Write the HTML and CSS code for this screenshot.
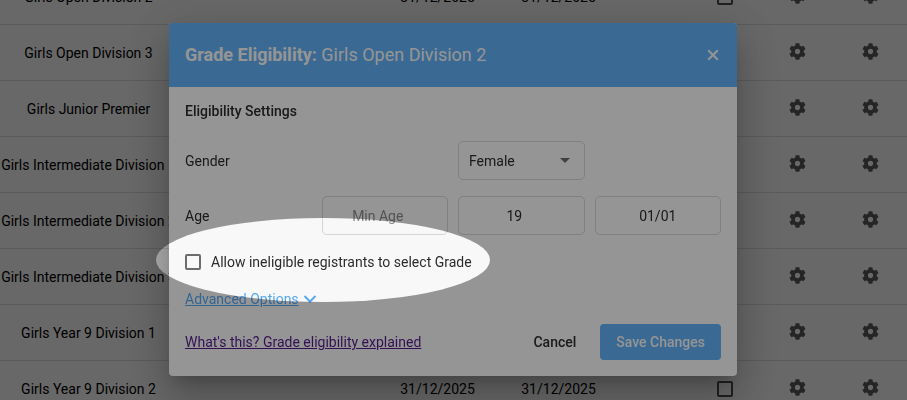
FILE: index.html
```
<!DOCTYPE html>
<html lang="en">
<head>
    <meta charset="UTF-8" />
    <title>Grade Eligibility</title>
    <link rel="stylesheet" href="styles.css">
</head>
<body>
    <svg class="sprite" aria-hidden="true">
        <symbol id="cog" viewBox="0 0 512 512">
            <path d="M487.4 315.7l-42.6-24.6c4.3-23.2 4.3-47 0-70.2l42.6-24.6c4.9-2.8 7.1-8.6 5.5-14-11.1-35.6-30-67.8-54.7-94.6-3.8-4.1-10-5.1-14.8-2.3L380.8 110c-17.9-15.4-38.5-27.3-60.8-35.1V25.8c0-5.6-3.9-10.5-9.4-11.7-36.7-8.2-74.3-7.8-109.2 0-5.5 1.2-9.4 6.1-9.4 11.7V75c-22.2 7.9-42.8 19.8-60.8 35.1L88.7 85.5c-4.9-2.8-11-1.9-14.8 2.3-24.7 26.7-43.6 58.9-54.7 94.6-1.7 5.4.6 11.2 5.5 14L67.3 221c-4.3 23.2-4.3 47 0 70.2l-42.6 24.6c-4.9 2.8-7.1 8.6-5.5 14 11.1 35.6 30 67.8 54.7 94.6 3.8 4.1 10 5.1 14.8 2.3l42.6-24.6c17.9 15.4 38.5 27.3 60.8 35.1v49.2c0 5.6 3.9 10.5 9.4 11.7 36.7 8.2 74.3 7.8 109.2 0 5.5-1.2 9.4-6.1 9.4-11.7v-49.2c22.2-7.9 42.8-19.8 60.8-35.1l42.6 24.6c4.9 2.8 11 1.9 14.8-2.3 24.7-26.7 43.6-58.9 54.7-94.6 1.5-5.5-.7-11.3-5.6-14.1zM256 336c-44.1 0-80-35.9-80-80s35.9-80 80-80 80 35.9 80 80-35.9 80-80 80z"/>
        </symbol>
    </svg>

    <table class="grades">
        <colgroup>
            <col class="col-name"><col><col class="col-date"><col class="col-date"><col class="col-gap"><col class="col-icon"><col class="col-icon"><col class="col-icon">
        </colgroup>
        <tbody>
            <tr>
                <td>Girls Open Division 2</td><td></td><td>31/12/2025</td><td>31/12/2025</td><td></td>
                <td><input type="checkbox" class="check check-dark" aria-label="Select Girls Open Division 2"></td>
                <td><button class="cog" aria-label="Eligibility"><svg><use href="#cog"/></svg></button></td>
                <td><button class="cog" aria-label="Settings"><svg><use href="#cog"/></svg></button></td>
            </tr>
            <tr>
                <td>Girls Open Division 3</td><td></td><td>31/12/2025</td><td>31/12/2025</td><td></td>
                <td><input type="checkbox" class="check check-dark" aria-label="Select Girls Open Division 3"></td>
                <td><button class="cog" aria-label="Eligibility"><svg><use href="#cog"/></svg></button></td>
                <td><button class="cog" aria-label="Settings"><svg><use href="#cog"/></svg></button></td>
            </tr>
            <tr>
                <td>Girls Junior Premier</td><td></td><td>31/12/2025</td><td>31/12/2025</td><td></td>
                <td><input type="checkbox" class="check check-dark" aria-label="Select Girls Junior Premier"></td>
                <td><button class="cog" aria-label="Eligibility"><svg><use href="#cog"/></svg></button></td>
                <td><button class="cog" aria-label="Settings"><svg><use href="#cog"/></svg></button></td>
            </tr>
            <tr>
                <td>Girls Intermediate Division 1</td><td></td><td>31/12/2025</td><td>31/12/2025</td><td></td>
                <td><input type="checkbox" class="check check-dark" aria-label="Select Girls Intermediate Division 1"></td>
                <td><button class="cog" aria-label="Eligibility"><svg><use href="#cog"/></svg></button></td>
                <td><button class="cog" aria-label="Settings"><svg><use href="#cog"/></svg></button></td>
            </tr>
            <tr>
                <td>Girls Intermediate Division 2</td><td></td><td>31/12/2025</td><td>31/12/2025</td><td></td>
                <td><input type="checkbox" class="check check-dark" aria-label="Select Girls Intermediate Division 2"></td>
                <td><button class="cog" aria-label="Eligibility"><svg><use href="#cog"/></svg></button></td>
                <td><button class="cog" aria-label="Settings"><svg><use href="#cog"/></svg></button></td>
            </tr>
            <tr>
                <td>Girls Intermediate Division 3</td><td></td><td>31/12/2025</td><td>31/12/2025</td><td></td>
                <td><input type="checkbox" class="check check-dark" aria-label="Select Girls Intermediate Division 3"></td>
                <td><button class="cog" aria-label="Eligibility"><svg><use href="#cog"/></svg></button></td>
                <td><button class="cog" aria-label="Settings"><svg><use href="#cog"/></svg></button></td>
            </tr>
            <tr>
                <td>Girls Year 9 Division 1</td><td></td><td>31/12/2025</td><td>31/12/2025</td><td></td>
                <td><input type="checkbox" class="check check-dark" aria-label="Select Girls Year 9 Division 1"></td>
                <td><button class="cog" aria-label="Eligibility"><svg><use href="#cog"/></svg></button></td>
                <td><button class="cog" aria-label="Settings"><svg><use href="#cog"/></svg></button></td>
            </tr>
            <tr>
                <td>Girls Year 9 Division 2</td><td></td><td>31/12/2025</td><td>31/12/2025</td><td></td>
                <td><input type="checkbox" class="check check-dark" aria-label="Select Girls Year 9 Division 2"></td>
                <td><button class="cog" aria-label="Eligibility"><svg><use href="#cog"/></svg></button></td>
                <td><button class="cog" aria-label="Settings"><svg><use href="#cog"/></svg></button></td>
            </tr>
        </tbody>
    </table>

    <div class="backdrop">
        <div class="dialog" role="dialog" aria-labelledby="dialog-title">
            <div class="dialog-header">
                <h2 id="dialog-title"><b>Grade Eligibility:</b> Girls Open Division 2</h2>
                <button class="close" aria-label="Close">
                    <svg viewBox="0 0 12 12"><path d="M1.2 1.2l9.6 9.6M10.8 1.2l-9.6 9.6"/></svg>
                </button>
            </div>
            <form class="dialog-body">
                <h3>Eligibility Settings</h3>
                <div class="fields">
                    <label class="gender-label" for="gender">Gender</label>
                    <div class="select">
                        <select id="gender">
                            <option>Female</option>
                            <option>Male</option>
                        </select>
                    </div>
                    <label class="age-label" for="min-age">Age</label>
                    <input type="text" class="age" id="min-age" placeholder="Min Age">
                    <input type="text" class="age" value="19" aria-label="Max age">
                    <input type="text" value="01/01" aria-label="Age date">
                </div>
                <label class="allow">
                    <input type="checkbox" class="check">
                    Allow ineligible registrants to select Grade
                </label>
                <a href="#" class="advanced"><span>Advanced Options</span><svg viewBox="0 0 14 8"><path d="M1.5 1l5.5 5.5 5.5-5.5"/></svg></a>
                <div class="actions">
                    <a href="#" class="help">What's this? Grade eligibility explained</a>
                    <button type="button" class="btn">Cancel</button>
                    <button type="button" class="btn btn-save">Save Changes</button>
                </div>
            </form>
            <div class="spotlight"></div>
        </div>
    </div>
</body>
</html>
```

FILE: styles.css
```
* {
    margin: 0;
    padding: 0;
    box-sizing: border-box;
}
body {
    height: 100vh;
    overflow: hidden;
    font-family: Roboto, sans-serif;
    font-size: 14px;
    line-height: 20px;
    color: #2c2c2c;
    background-color: #fff;
}
input, select, button {
    font: inherit;
    color: inherit;
}
button {
    border: none;
    background: none;
    cursor: pointer;
}
.sprite {
    display: none;
}

/* grades list */
.grades {
    width: 100%;
    margin-top: -31px;
    table-layout: fixed;
    border-collapse: separate;
    border-spacing: 0;
    color: #000;
}
.col-name {
    width: 177px;
}
.col-date {
    width: 121px;
}
.col-gap {
    width: 69px;
}
.col-icon {
    width: 73px;
}
.grades td {
    height: 56px;
    border-bottom: 1px solid #e0e0e0;
    text-align: center;
    vertical-align: middle;
    white-space: nowrap;
}
.check {
    appearance: none;
    display: block;
    width: 16px;
    height: 16px;
    border: 2px solid #6c6c6c;
    border-radius: 2px;
}
.check-dark {
    margin: 0 auto;
    border-color: #505050;
}
.cog {
    display: block;
    margin: 0 auto;
    padding-bottom: 2px;
}
.cog svg {
    display: block;
    width: 17px;
    height: 17px;
    fill: #5c5c5c;
}

/* dialog */
.backdrop {
    position: fixed;
    inset: 0;
    display: flex;
    align-items: center;
    justify-content: center;
    padding: 0 1px 1px 0;
    background-color: rgba(0, 0, 0, 0.32);
}
.dialog {
    position: relative;
    width: 100%;
    max-width: 568px;
    background-color: #f8f8f8;
    border-radius: 4px;
    box-shadow: 0 11px 15px -7px rgba(0, 0, 0, 0.2),
        0 24px 38px 3px rgba(0, 0, 0, 0.14),
        0 9px 46px 8px rgba(0, 0, 0, 0.12);
}
.dialog-header {
    display: flex;
    align-items: center;
    justify-content: space-between;
    height: 64px;
    padding: 0 16px;
    color: #f8f8f8;
    background-color: #62aff5;
    border-radius: 4px 4px 0 0;
}
.dialog-header h2 {
    font-size: 18px;
    font-weight: 400;
}
.close {
    padding: 2px;
}
.close svg {
    display: block;
    width: 12px;
    height: 12px;
    fill: none;
    stroke: #f8f8f8;
    stroke-width: 2;
}
.dialog-body {
    padding: 14px 16px 16px;
}
.dialog-body h3 {
    font-size: 14px;
    font-weight: 500;
}
.fields {
    display: grid;
    grid-template-columns: repeat(4, 1fr);
    gap: 16px 10px;
    align-items: center;
    margin-top: 20px;
}
.gender-label {
    grid-column: span 2;
}
.select {
    grid-column: 3;
    position: relative;
}
.select::after {
    content: "";
    position: absolute;
    top: 17px;
    right: 15px;
    border: 5px solid transparent;
    border-top-color: #6c6c6c;
    border-bottom: none;
    pointer-events: none;
}
.age-label {
    grid-column: 1;
}
.fields select,
.fields input {
    display: block;
    width: 100%;
    height: 39px;
    padding: 0 10px;
    border: 1px solid rgba(0, 0, 0, 0.14);
    border-radius: 5px;
    background: none;
    appearance: none;
}
.fields input {
    text-align: center;
}
.fields .age {
    padding-right: 24px;
}
.fields input::placeholder {
    color: #8a8a8a;
}
.allow {
    display: flex;
    align-items: center;
    gap: 10px;
    margin-top: 17px;
}
.advanced {
    display: inline-flex;
    align-items: center;
    gap: 4px;
    margin-top: 17px;
    color: #55a8f5;
    text-decoration: none;
}
.advanced span {
    text-decoration: underline;
}
.advanced svg {
    width: 14px;
    height: 8px;
    fill: none;
    stroke: #55a8f5;
    stroke-width: 2;
}
.actions {
    display: flex;
    align-items: center;
    margin-top: 15px;
}
.help {
    margin-right: auto;
    color: #551a8b;
}
.btn {
    height: 36px;
    padding: 0 16px;
    border-radius: 4px;
    font-weight: 500;
}
.btn-save {
    margin-left: 8px;
    color: #f8f8f8;
    background-color: #62aff5;
}

/* everything outside the ellipse is dimmed */
.spotlight {
    position: absolute;
    top: 195px;
    left: -13px;
    width: 334px;
    height: 84px;
    border-radius: 50%;
    box-shadow: 0 0 0 2000px rgba(0, 0, 0, 0.4);
    pointer-events: none;
}
```
